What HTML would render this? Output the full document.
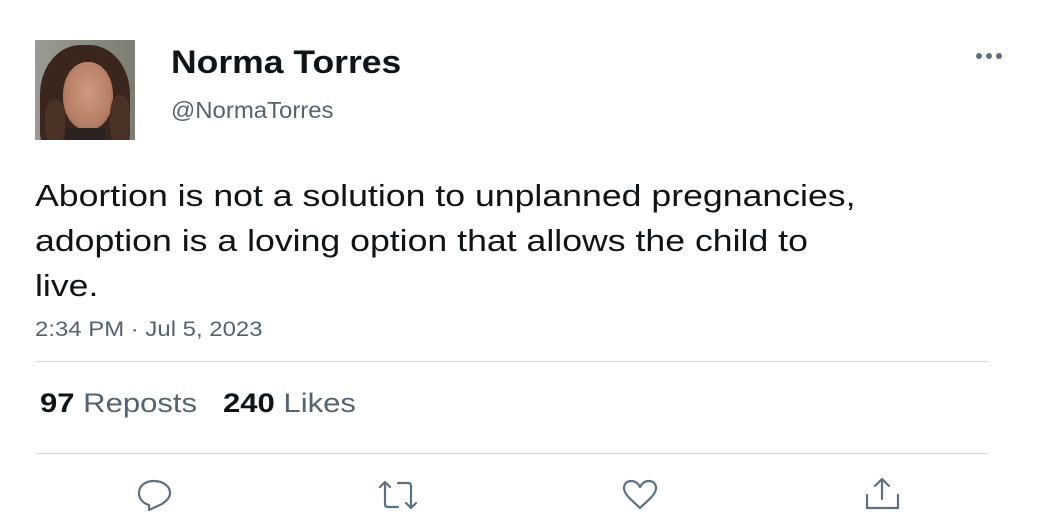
<!DOCTYPE html>
<html><head><meta charset="utf-8"><style>
html,body{margin:0;padding:0;background:#fff;width:1050px;height:525px;overflow:hidden;font-family:"Liberation Sans",Helvetica,Arial,sans-serif;}
.abs{position:absolute;white-space:nowrap;transform-origin:0 0;}
</style></head><body>
<div class="abs" style="left:35px;top:40px;width:100px;height:100px;overflow:hidden;background:linear-gradient(90deg,#9a9b92 0%,#7c7e72 100%);">
  <div style="position:absolute;left:5px;top:5px;width:90px;height:110px;border-radius:45% 45% 20% 20%;background:#3a261d;"></div>
  <div style="position:absolute;left:28px;top:22px;width:50px;height:68px;border-radius:48%;background:radial-gradient(ellipse at 50% 45%,#cf9b80 0%,#b88066 60%,#8d5d48 100%);"></div>
  <div style="position:absolute;left:10px;top:60px;width:20px;height:45px;background:#4a3226;border-radius:40%;"></div>
  <div style="position:absolute;left:75px;top:55px;width:20px;height:50px;background:#4a3226;border-radius:40%;"></div>
  <div style="position:absolute;left:30px;top:88px;width:40px;height:14px;background:#2a2220;"></div>
</div>
<div class="abs" style="left:171px;top:44px;font-size:32px;font-weight:bold;color:#0f1419;transform:scaleX(1.11);">Norma Torres</div>
<div class="abs" style="left:171px;top:97px;font-size:23px;color:#536471;transform:scaleX(1.04);">@NormaTorres</div>
<svg class="abs" style="left:975px;top:50px" width="28" height="12"><circle cx="4" cy="6" r="3" fill="#5b7083"/><circle cx="14" cy="6" r="3" fill="#5b7083"/><circle cx="24" cy="6" r="3" fill="#5b7083"/></svg>
<div class="abs" style="left:35px;top:173px;font-size:31px;line-height:45px;color:#0f1419;transform:scaleX(1.15);">Abortion is not a solution to unplanned pregnancies,<br>adoption is a loving option that allows the child to<br>live.</div>
<div class="abs" style="left:35px;top:318px;font-size:21px;color:#536471;transform:scaleX(1.14);">2:34 PM · Jul 5, 2023</div>
<div class="abs" style="left:35px;top:361px;width:954px;height:1px;background:#d6d9db;"></div>
<div class="abs" style="left:40px;top:388px;font-size:27px;color:#536471;transform:scaleX(1.15);"><b style="color:#0f1419">97</b> Reposts &nbsp;&nbsp;<b style="color:#0f1419">240</b> Likes</div>
<div class="abs" style="left:35px;top:453px;width:954px;height:1px;background:#d6d9db;"></div>
<svg class="abs" style="left:136px;top:478px" width="40" height="34" fill="none" stroke="#5b7083" stroke-width="2.2" stroke-linejoin="round" stroke-linecap="round">
<path d="M13 27C6 25 3 20 3 15 3 8 9 3 18 3s16 5 16 12c0 5-4 8-8 11l-13 6Z"/></svg>
<svg class="abs" style="left:376px;top:478px" width="44" height="34" fill="none" stroke="#5b7083" stroke-width="2.2" stroke-linejoin="round" stroke-linecap="round">
<path d="M4 9l5-5 5 5M9 4v22q0 3 3 3h10"/><path d="M40 25l-5 5-5-5M35 30V8q0-3-3-3H22"/></svg>
<svg class="abs" style="left:621px;top:478px" width="40" height="34" fill="none" stroke="#5b7083" stroke-width="2.2" stroke-linejoin="round">
<path d="M19 30C13 24 3 17 3 10 3 5 7 3 10 3c4 0 7 2 9 6 2-4 5-6 9-6 3 0 7 2 7 7 0 7-10 14-16 20Z"/></svg>
<svg class="abs" style="left:864px;top:476px" width="40" height="36" fill="none" stroke="#5b7083" stroke-width="2.2" stroke-linejoin="round" stroke-linecap="round">
<path d="M18 3v20M11 10l7-7 7 7M3 19v13h31V19"/></svg>
</body></html>
